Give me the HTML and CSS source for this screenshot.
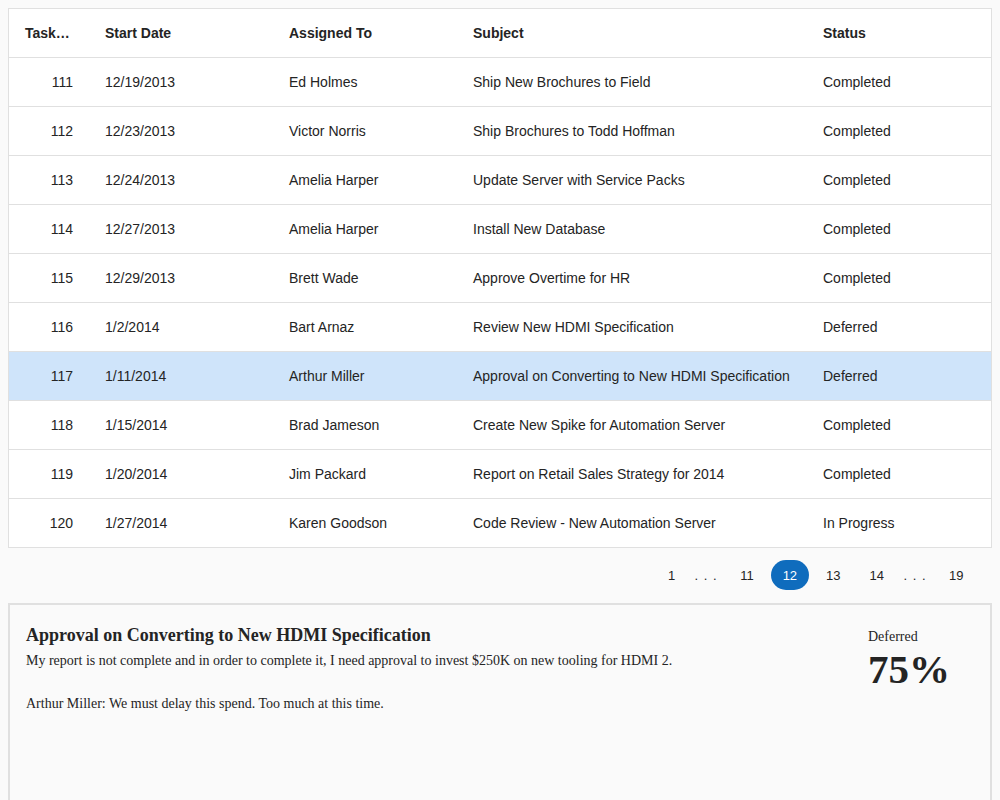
FILE: index.html
```html
<!DOCTYPE html>
<html>
<head>
<meta charset="utf-8">
<link rel="stylesheet" href="styles.css">
</head>
<body>
<div class="grid">
  <table class="tasks">
    <colgroup>
      <col class="c-id"><col class="c-date"><col class="c-who"><col class="c-subj"><col class="c-status">
    </colgroup>
    <thead>
      <tr><th>Task…</th><th>Start Date</th><th>Assigned To</th><th>Subject</th><th>Status</th></tr>
    </thead>
    <tbody>
      <tr><td class="num">111</td><td>12/19/2013</td><td>Ed Holmes</td><td>Ship New Brochures to Field</td><td>Completed</td></tr>
      <tr><td class="num">112</td><td>12/23/2013</td><td>Victor Norris</td><td>Ship Brochures to Todd Hoffman</td><td>Completed</td></tr>
      <tr><td class="num">113</td><td>12/24/2013</td><td>Amelia Harper</td><td>Update Server with Service Packs</td><td>Completed</td></tr>
      <tr><td class="num">114</td><td>12/27/2013</td><td>Amelia Harper</td><td>Install New Database</td><td>Completed</td></tr>
      <tr><td class="num">115</td><td>12/29/2013</td><td>Brett Wade</td><td>Approve Overtime for HR</td><td>Completed</td></tr>
      <tr><td class="num">116</td><td>1/2/2014</td><td>Bart Arnaz</td><td>Review New HDMI Specification</td><td>Deferred</td></tr>
      <tr class="selected"><td class="num">117</td><td>1/11/2014</td><td>Arthur Miller</td><td>Approval on Converting to New HDMI Specification</td><td>Deferred</td></tr>
      <tr><td class="num">118</td><td>1/15/2014</td><td>Brad Jameson</td><td>Create New Spike for Automation Server</td><td>Completed</td></tr>
      <tr><td class="num">119</td><td>1/20/2014</td><td>Jim Packard</td><td>Report on Retail Sales Strategy for 2014</td><td>Completed</td></tr>
      <tr><td class="num">120</td><td>1/27/2014</td><td>Karen Goodson</td><td>Code Review - New Automation Server</td><td>In Progress</td></tr>
    </tbody>
  </table>
</div>
<nav class="pager">
  <span class="page">1</span>
  <span class="dots">. . .</span>
  <span class="page">11</span>
  <span class="page current">12</span>
  <span class="page">13</span>
  <span class="page">14</span>
  <span class="dots">. . .</span>
  <span class="page">19</span>
</nav>
<section class="detail">
  <div class="detail-main">
    <h2 class="detail-title">Approval on Converting to New HDMI Specification</h2>
    <p class="detail-text">My report is not complete and in order to complete it, I need approval to invest $250K on new tooling for HDMI 2.</p>
    <p class="detail-text note">Arthur Miller: We must delay this spend. Too much at this time.</p>
  </div>
  <div class="detail-side">
    <div class="side-status">Deferred</div>
    <div class="side-pct">75%</div>
  </div>
</section>
</body>
</html>
```
FILE: styles.css
```css
html, body {
  margin: 0;
  padding: 0;
}
body {
  background: #fafafa;
  padding: 8px;
  font-family: "Liberation Sans", Arial, sans-serif;
  color: #242424;
}
.grid {
  border: 1px solid #e0e0e0;
  background: #fff;
}
.tasks {
  width: 100%;
  border-collapse: collapse;
  table-layout: fixed;
  font-size: 14px;
}
.c-id { width: 80px; }
.c-date { width: 184px; }
.c-who { width: 184px; }
.c-subj { width: 350px; }
.c-status { width: 184px; }
.tasks th,
.tasks td {
  height: 48px;
  padding: 0 16px;
  text-align: left;
  white-space: nowrap;
  overflow: hidden;
  text-overflow: ellipsis;
  border-bottom: 1px solid #e0e0e0;
}
.tasks th {
  font-weight: bold;
}
.tasks tbody tr:last-child td {
  border-bottom: none;
}
.tasks td.num {
  text-align: right;
}
.tasks tr.selected td {
  background: #cfe4fa;
}
.pager {
  display: flex;
  justify-content: flex-end;
  align-items: center;
  height: 30px;
  margin: 12px 0 13px;
  padding-right: 17px;
  font-size: 13px;
  color: #242424;
}
.page {
  display: flex;
  align-items: center;
  justify-content: center;
  padding: 0 11.5px;
  height: 30px;
  margin-left: 6px;
  border-radius: 15px;
}
.dots {
  display: flex;
  align-items: center;
  justify-content: center;
  width: 33px;
  height: 30px;
  margin-left: 3px;
  letter-spacing: 1px;
}
.page.current {
  background: #0f6cbd;
  color: #fff;
}
.detail {
  display: flex;
  border: 2px solid #e0e0e0;
  border-bottom: none;
  min-height: 200px;
  padding: 18px 16px 0;
  font-family: "Liberation Serif", "Times New Roman", serif;
  color: #242424;
}
.detail-main {
  flex: 1;
}
.detail-title {
  margin: 0;
  font-size: 18px;
  font-weight: bold;
  line-height: 24px;
}
.detail-text {
  margin: 4px 0 0;
  font-size: 14px;
  line-height: 20px;
}
.detail-text.note {
  margin-top: 23px;
}
.detail-side {
  width: 106px;
  padding-top: 5px;
}
.side-status {
  font-size: 14px;
  line-height: 18px;
}
.side-pct {
  font-size: 41px;
  font-weight: bold;
  line-height: 46px;
  letter-spacing: 0;
}
```
